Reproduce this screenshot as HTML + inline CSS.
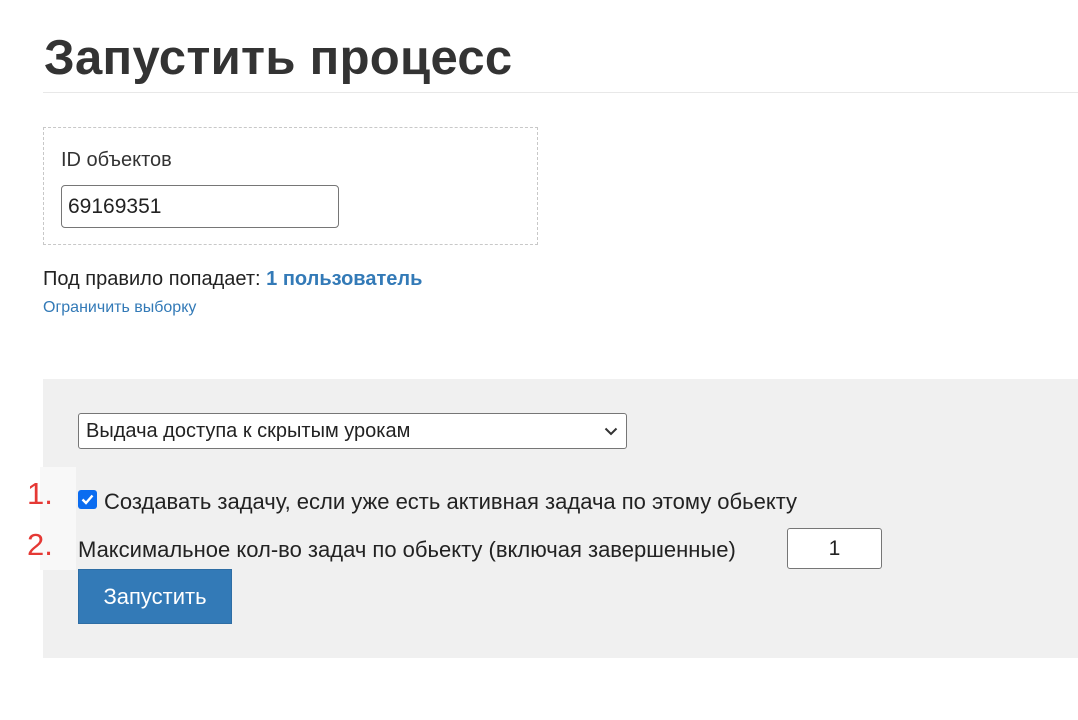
<!DOCTYPE html>
<html><head><meta charset="utf-8"><style>
*{box-sizing:border-box;margin:0;padding:0}
body{width:1078px;height:720px;background:#fff;position:relative;overflow:hidden;font-family:"Liberation Sans",sans-serif;color:#333}
.a{position:absolute;white-space:nowrap}
</style></head><body>
<div class="a" style="left:44px;top:28px;font-size:49px;font-weight:bold;color:#333;line-height:60px;letter-spacing:0.3px">Запустить процесс</div>
<div class="a" style="left:43px;top:92px;width:1035px;height:1px;background:#e8e8e8"></div>
<div class="a" style="left:43px;top:127px;width:495px;height:118px;border:1px dashed #c8c8c8"></div>
<div class="a" style="left:61px;top:148px;font-size:20px;line-height:24px">ID объектов</div>
<div class="a" style="left:61px;top:185px;width:278px;height:43px;border:1px solid #767676;border-radius:4px;font-size:21px;line-height:41px;padding-left:6px;color:#222">69169351</div>
<div class="a" style="left:43px;top:267px;font-size:20px;line-height:24px;color:#222">Под правило попадает: <b style="color:#337ab7">1 пользователь</b></div>
<div class="a" style="left:43px;top:298px;font-size:16px;line-height:20px;color:#337ab7">Ограничить выборку</div>
<div class="a" style="left:43px;top:379px;width:1035px;height:279px;background:#f0f0f0"></div>
<div class="a" style="left:40px;top:467px;width:36px;height:103px;background:#f8f8f8"></div>
<div class="a" style="left:78px;top:413px;width:549px;height:36px;border:1px solid #767676;border-radius:3px;background:#fff;font-size:20px;line-height:34px;padding-left:7px;color:#222">Выдача доступа к скрытым урокам
<svg style="position:absolute;right:8px;top:13px" width="14" height="9" viewBox="0 0 14 9"><path d="M1.5 1.5L7 7L12.5 1.5" fill="none" stroke="#333" stroke-width="2"/></svg></div>
<div class="a" style="left:27px;top:476px;font-size:31px;line-height:36px;color:#e53935">1.</div>
<div class="a" style="left:27px;top:527px;font-size:31px;line-height:36px;color:#e53935">2.</div>
<div class="a" style="left:78px;top:490px;width:19px;height:19px;background:#0b6cf0;border-radius:3px">
<svg width="19" height="19" viewBox="0 0 19 19"><path d="M4.5 9.5L8 13L14.5 5.5" fill="none" stroke="#fff" stroke-width="2.4"/></svg></div>
<div class="a" style="left:104px;top:488px;font-size:22px;line-height:28px;color:#222">Создавать задачу, если уже есть активная задача по этому обьекту</div>
<div class="a" style="left:78px;top:536px;font-size:22px;line-height:28px;color:#222">Максимальное кол-во задач по обьекту (включая завершенные)</div>
<div class="a" style="left:787px;top:528px;width:95px;height:41px;border:1px solid #767676;border-radius:3px;background:#fff;font-size:21px;line-height:39px;text-align:center;color:#222">1</div>
<div class="a" style="left:78px;top:569px;width:154px;height:55px;background:#337ab7;border:1px solid #2e6da4;color:#fff;font-size:22px;line-height:53px;text-align:center">Запустить</div>
</body></html>
